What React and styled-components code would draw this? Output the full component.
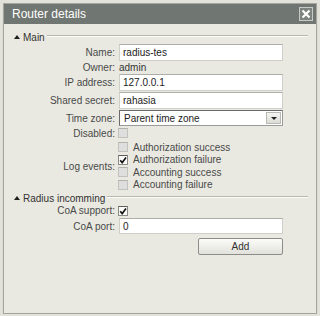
import styled, { createGlobalStyle } from 'styled-components';

const GlobalStyle = createGlobalStyle`
  html, body {
    margin: 0;
    padding: 0;
  }
  body {
    background: #e2e2da;
    font-family: "Liberation Sans", Arial, sans-serif;
    font-size: 10px;
    color: #3a3a3a;
  }
`;

const logEvents = [
  { label: 'Authorization success', checked: false },
  { label: 'Authorization failure', checked: true },
  { label: 'Accounting success', checked: false },
  { label: 'Accounting failure', checked: false },
];

const Checkbox = ({ checked }) => (
  <Box $checked={checked}>
    {checked && (
      <svg width="8" height="8" viewBox="0 0 8 8">
        <path d="M1.2 4.2 L3.2 6.6 L7 1.6" fill="none" stroke="#111" strokeWidth="1.6" />
      </svg>
    )}
  </Box>
);

const Section = ({ title, children }) => (
  <>
    <SectionHead>
      <Arrow />
      <SectionTitle>{title}</SectionTitle>
      <Rule />
    </SectionHead>
    {children}
  </>
);

const App = () => (
  <>
    <GlobalStyle />
    <Page>
      <Window>
        <TitleBar>
          <Title>Router details</Title>
          <Close aria-label="Close">
            <svg width="10" height="10" viewBox="0 0 10 10">
              <path d="M1.5 1.5 L8.5 8.5 M8.5 1.5 L1.5 8.5" stroke="#fff" strokeWidth="2.2" />
            </svg>
          </Close>
        </TitleBar>
        <Body>
          <Section title="Main">
            <Field>
              <Label>Name:</Label>
              <Input>radius-tes</Input>
            </Field>
            <Field $h={11}>
              <Label>Owner:</Label>
              <Value>admin</Value>
            </Field>
            <Field>
              <Label>IP address:</Label>
              <Input>127.0.0.1</Input>
            </Field>
            <Field>
              <Label>Shared secret:</Label>
              <Input>rahasia</Input>
            </Field>
            <Field $h={16}>
              <Label>Time zone:</Label>
              <Select>
                <span>Parent time zone</span>
                <DropButton>
                  <DownArrow />
                </DropButton>
              </Select>
            </Field>
            <Field $h={12} $gap={2}>
              <Label>Disabled:</Label>
              <Checkbox checked={false} />
            </Field>
            <Field $h={50}>
              <Label>Log events:</Label>
              <CheckList>
                {logEvents.map((e) => (
                  <CheckItem key={e.label}>
                    <Checkbox checked={e.checked} />
                    <span>{e.label}</span>
                  </CheckItem>
                ))}
              </CheckList>
            </Field>
          </Section>
          <Section title="Radius incomming">
            <Field $h={11} $gap={2}>
              <Label>CoA support:</Label>
              <Checkbox checked />
            </Field>
            <Field $h={16} $gap={4}>
              <Label>CoA port:</Label>
              <Input>0</Input>
            </Field>
            <Field $h={17}>
              <span />
              <Button>Add</Button>
            </Field>
          </Section>
        </Body>
      </Window>
    </Page>
  </>
);

const Page = styled.div`
  padding: 3px 4px 0 3px;
`;

const Window = styled.div`
  width: 312px;
  height: 309px;
  border: 1px solid #a4a69e;
  background: #e9e9e1;
  display: flex;
  flex-direction: column;
  box-shadow: 0 1px 1px rgba(0, 0, 0, 0.12);
`;

const TitleBar = styled.div`
  height: 20px;
  background: #707672;
  display: flex;
  align-items: center;
  justify-content: space-between;
  padding: 0 3px 0 8px;
`;

const Title = styled.div`
  color: #fff;
  font-size: 12px;
`;

const Close = styled.div`
  width: 12px;
  height: 12px;
  border: 1px solid #c9cbc7;
  background: #7d837f;
  display: flex;
  align-items: center;
  justify-content: center;
`;

const Body = styled.div`
  flex: 1;
  padding: 7px 8px 0 0;
  display: flex;
  flex-direction: column;
`;

const SectionHead = styled.div`
  display: flex;
  align-items: center;
  height: 13px;
  padding-left: 10px;
`;

const Arrow = styled.span`
  width: 0;
  height: 0;
  border-left: 3px solid transparent;
  border-right: 3px solid transparent;
  border-bottom: 4px solid #1e1e1e;
  margin-top: -1px;
`;

const SectionTitle = styled.span`
  margin-left: 3px;
  color: #333;
`;

const Rule = styled.span`
  flex: 1;
  height: 0;
  margin: -3px 0 0 2px;
  border-top: 1px solid #b7b8b0;
  border-bottom: 1px solid #fbfbf7;
`;

const Field = styled.div`
  display: grid;
  grid-template-columns: 111px 164px;
  column-gap: 4px;
  align-items: center;
  height: ${(p) => p.$h || 17}px;
  margin-bottom: ${(p) => (p.$gap !== undefined ? p.$gap : 1)}px;
`;

const Label = styled.span`
  text-align: right;
  color: #4a4a4a;
  white-space: nowrap;
`;

const Value = styled.span`
  color: #333;
`;

const Input = styled.div`
  height: 100%;
  box-sizing: border-box;
  background: #fff;
  border: 1px solid #cfcfc9;
  border-top-color: #aeaea8;
  padding-left: 3px;
  display: flex;
  align-items: center;
  color: #222;
`;

const Select = styled.div`
  height: 16px;
  box-sizing: border-box;
  background: #fff;
  border: 1px solid #6a6a6a;
  border-right-color: #9a9a9a;
  border-bottom-color: #9a9a9a;
  padding: 0 1px 0 4px;
  display: flex;
  align-items: center;
  justify-content: space-between;
  color: #222;
`;

const DropButton = styled.span`
  width: 13px;
  height: 10px;
  border: 1px solid #b9b9b3;
  background: linear-gradient(#f4f4f2, #dcdcd6);
  display: flex;
  align-items: center;
  justify-content: center;
`;

const DownArrow = styled.span`
  width: 0;
  height: 0;
  border-left: 3px solid transparent;
  border-right: 3px solid transparent;
  border-top: 3px solid #222;
`;

const Box = styled.span`
  width: 10px;
  height: 10px;
  box-sizing: border-box;
  margin-left: -1px;
  border: 1px solid ${(p) => (p.$checked ? '#8a8a86' : '#c2c2bc')};
  border-top-color: ${(p) => (p.$checked ? '#5e5e5a' : '#b2b2ac')};
  background: ${(p) => (p.$checked ? '#fafaf8' : '#dedede')};
  display: flex;
  align-items: center;
  justify-content: center;
`;

const CheckList = styled.div`
  display: flex;
  flex-direction: column;
`;

const CheckItem = styled.div`
  height: 12.5px;
  display: flex;
  align-items: center;
  gap: 5px;
  color: #4a4a4a;
`;

const Button = styled.div`
  width: 85px;
  height: 17px;
  box-sizing: border-box;
  justify-self: end;
  border: 1px solid #8c8c88;
  border-radius: 2px;
  background: linear-gradient(#fbfbf9, #e2e2dc);
  display: flex;
  align-items: center;
  justify-content: center;
  color: #333;
`;

export default App;
